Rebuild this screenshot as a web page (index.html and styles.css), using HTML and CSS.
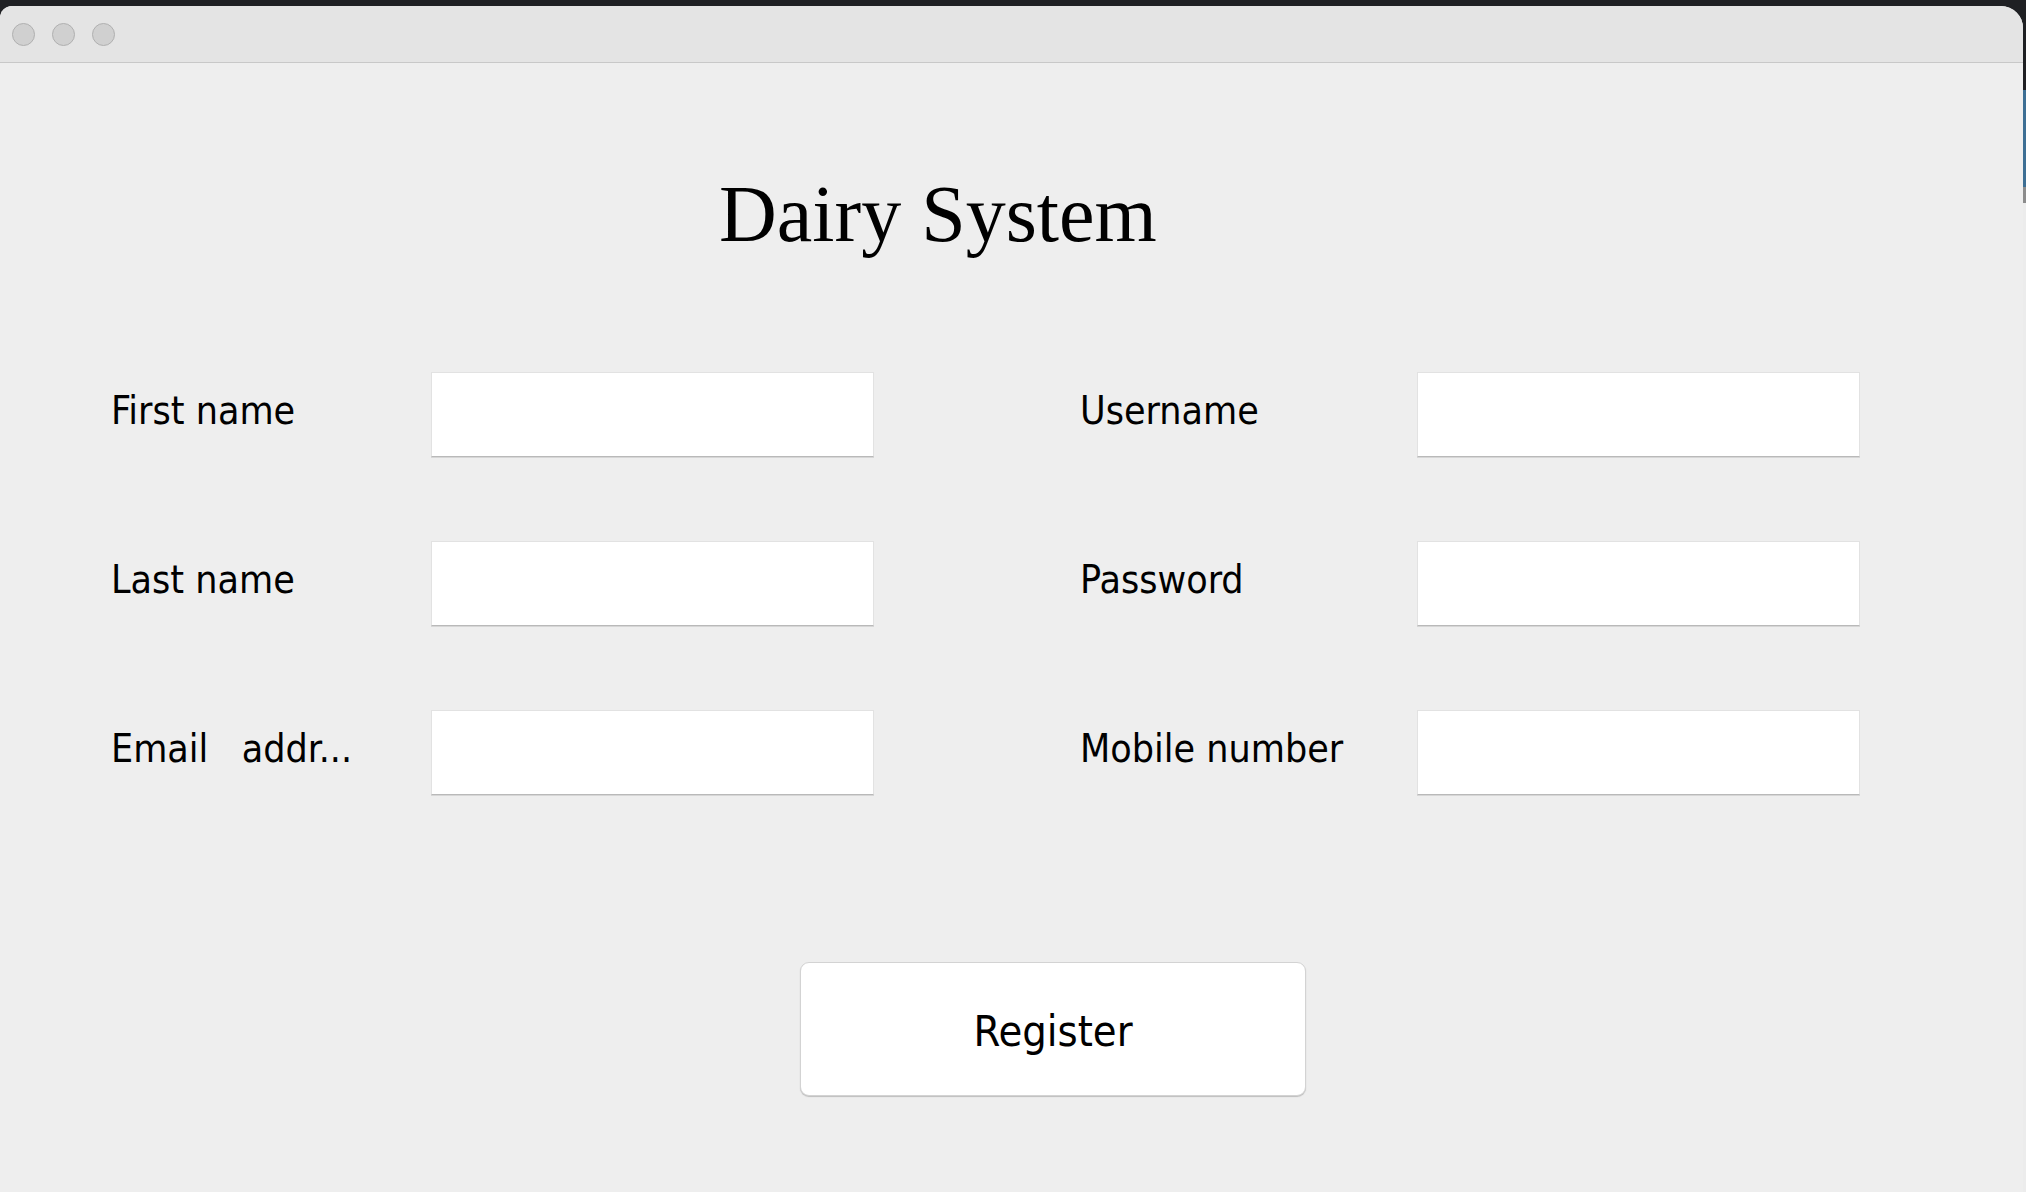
FILE: index.html
```html
<!DOCTYPE html>
<html lang="en">
<head>
<meta charset="utf-8">
<title>Dairy System</title>
<link rel="stylesheet" href="styles.css">
</head>
<body>
<div class="window">
  <div class="titlebar">
    <span class="light"></span>
    <span class="light"></span>
    <span class="light"></span>
  </div>
  <main class="content">
    <h1 class="title">Dairy System</h1>
    <div class="form">
      <label class="label c-l1">First name</label>
      <input class="field c-f1" type="text">
      <label class="label c-l2">Username</label>
      <input class="field c-f2" type="text">

      <label class="label c-l1">Last name</label>
      <input class="field c-f1" type="text">
      <label class="label c-l2">Password</label>
      <input class="field c-f2" type="password">

      <label class="label c-l1">Email   addr...</label>
      <input class="field c-f1" type="text">
      <label class="label c-l2">Mobile number</label>
      <input class="field c-f2" type="text">
    </div>
    <button class="register" type="button">Register</button>
  </main>
</div>
</body>
</html>
```

FILE: styles.css
```css
html, body {
  margin: 0;
  padding: 0;
}

body {
  width: 2026px;
  height: 1192px;
  overflow: hidden;
  background: linear-gradient(to bottom, #1f2023 0, #1f2023 90px, #3d6f94 90px, #3d6f94 187px, #8c8c8c 187px, #8c8c8c 203px, #ececec 203px);
}

.window {
  width: 2023px;
  height: 1186px;
  margin-top: 6px;
  border-radius: 12px 22px 0 0;
  overflow: hidden;
  background: #eeeeee;
  display: flex;
  flex-direction: column;
}

.titlebar {
  height: 56px;
  flex: none;
  background: #e4e4e4;
  border-bottom: 1px solid #c8c8c8;
  display: flex;
  align-items: center;
  gap: 17px;
  padding-left: 12px;
}

.light {
  width: 23px;
  height: 23px;
  box-sizing: border-box;
  border-radius: 50%;
  background: #d0d0d0;
  border: 1px solid #b0b0b0;
}

.content {
  flex: 1;
  background: #eeeeee;
  display: flex;
  flex-direction: column;
  align-items: flex-start;
}

.title {
  margin: 111px 0 0 719px;
  font-family: "Liberation Serif", "Times New Roman", serif;
  font-weight: normal;
  font-size: 80px;
  line-height: 80px;
  color: #000;
  white-space: nowrap;
}

.form {
  margin: 118px 0 0 111px;
  display: grid;
  grid-template-columns: 320px 443px 206px 337px 443px;
  grid-auto-rows: 85px;
  row-gap: 84px;
}

.c-l1 { grid-column: 1; }
.c-f1 { grid-column: 2; }
.c-l2 { grid-column: 4; }
.c-f2 { grid-column: 5; }

.label {
  font-family: "DejaVu Sans Condensed", "DejaVu Sans", sans-serif;
  font-stretch: condensed;
  font-size: 39px;
  line-height: 39px;
  padding-top: 19px;
  color: #000;
  white-space: pre;
}

.field {
  box-sizing: border-box;
  width: 443px;
  height: 85px;
  margin: 0;
  padding: 0 10px;
  background: #ffffff;
  border: 1px solid #e2e2e2;
  border-bottom: 1px solid #b9b9b9;
  box-shadow: 0 1px 0 #d6d6d6;
  border-radius: 0;
  outline: none;
}

.register {
  margin: 167px 0 0 800px;
  box-sizing: border-box;
  width: 506px;
  height: 134px;
  padding: 5px 0 0 0;
  background: #ffffff;
  border: 1px solid #d3d3d3;
  border-radius: 9px;
  box-shadow: 0 1px 1px #bdbdbd;
  font-family: "DejaVu Sans Condensed", "DejaVu Sans", sans-serif;
  font-stretch: condensed;
  font-size: 43px;
  line-height: 43px;
  color: #000;
  display: flex;
  align-items: center;
  justify-content: center;
}
```
